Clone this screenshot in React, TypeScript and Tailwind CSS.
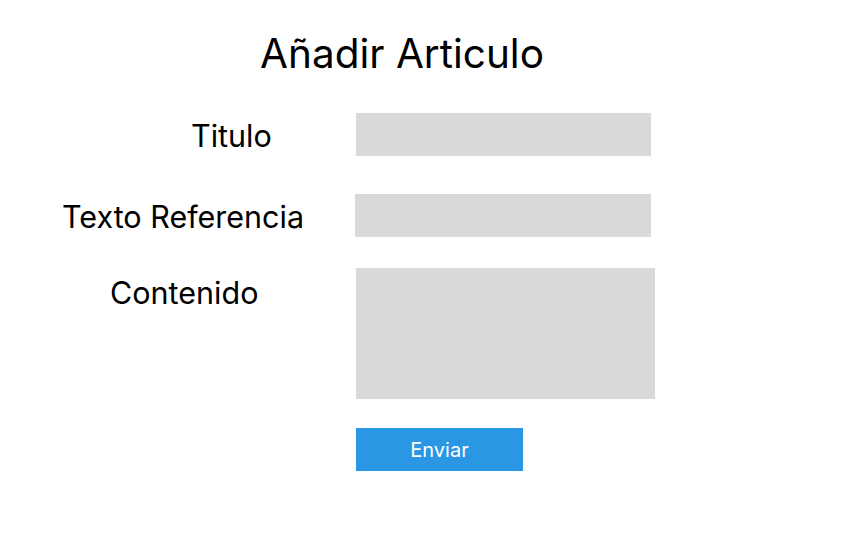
export default function App() {
  return (
    <div
      className="w-[847px] h-[558px] bg-white text-black overflow-hidden"
      style={{ fontFamily: 'Inter, "Noto Sans", sans-serif' }}
    >
      <h1 className="pt-[30px] text-center text-[40.5px] leading-[48px] font-normal pr-[43px]">Añadir Articulo</h1>

      <form className="mt-[35px] flex flex-col" onSubmit={(e) => e.preventDefault()}>
        <div className="flex items-center h-[43px]">
          <label className="w-[356px] pl-[191px] pt-[4px] text-[30.5px] leading-none">Titulo</label>
          <input type="text" className="w-[295px] h-[43px] bg-[#d9d9d9] outline-none" />
        </div>

        <div className="mt-[38px] flex items-center h-[43px]">
          <label className="w-[355px] pl-[62px] pt-[4px] text-[30.5px] leading-none">Texto Referencia</label>
          <input type="text" className="w-[296px] h-[43px] bg-[#d9d9d9] outline-none" />
        </div>

        <div className="mt-[31px] flex items-start">
          <label className="w-[356px] pl-[110px] pt-[10px] text-[30.5px] leading-none">Contenido</label>
          <textarea className="w-[299px] h-[131px] bg-[#d9d9d9] outline-none resize-none" />
        </div>

        <div className="mt-[29px] pl-[356px]">
          <button
            type="submit"
            className="w-[167px] h-[43px] bg-[#2997e3] text-white text-[20px] leading-none"
          >
            Enviar
          </button>
        </div>
      </form>
    </div>
  )
}
